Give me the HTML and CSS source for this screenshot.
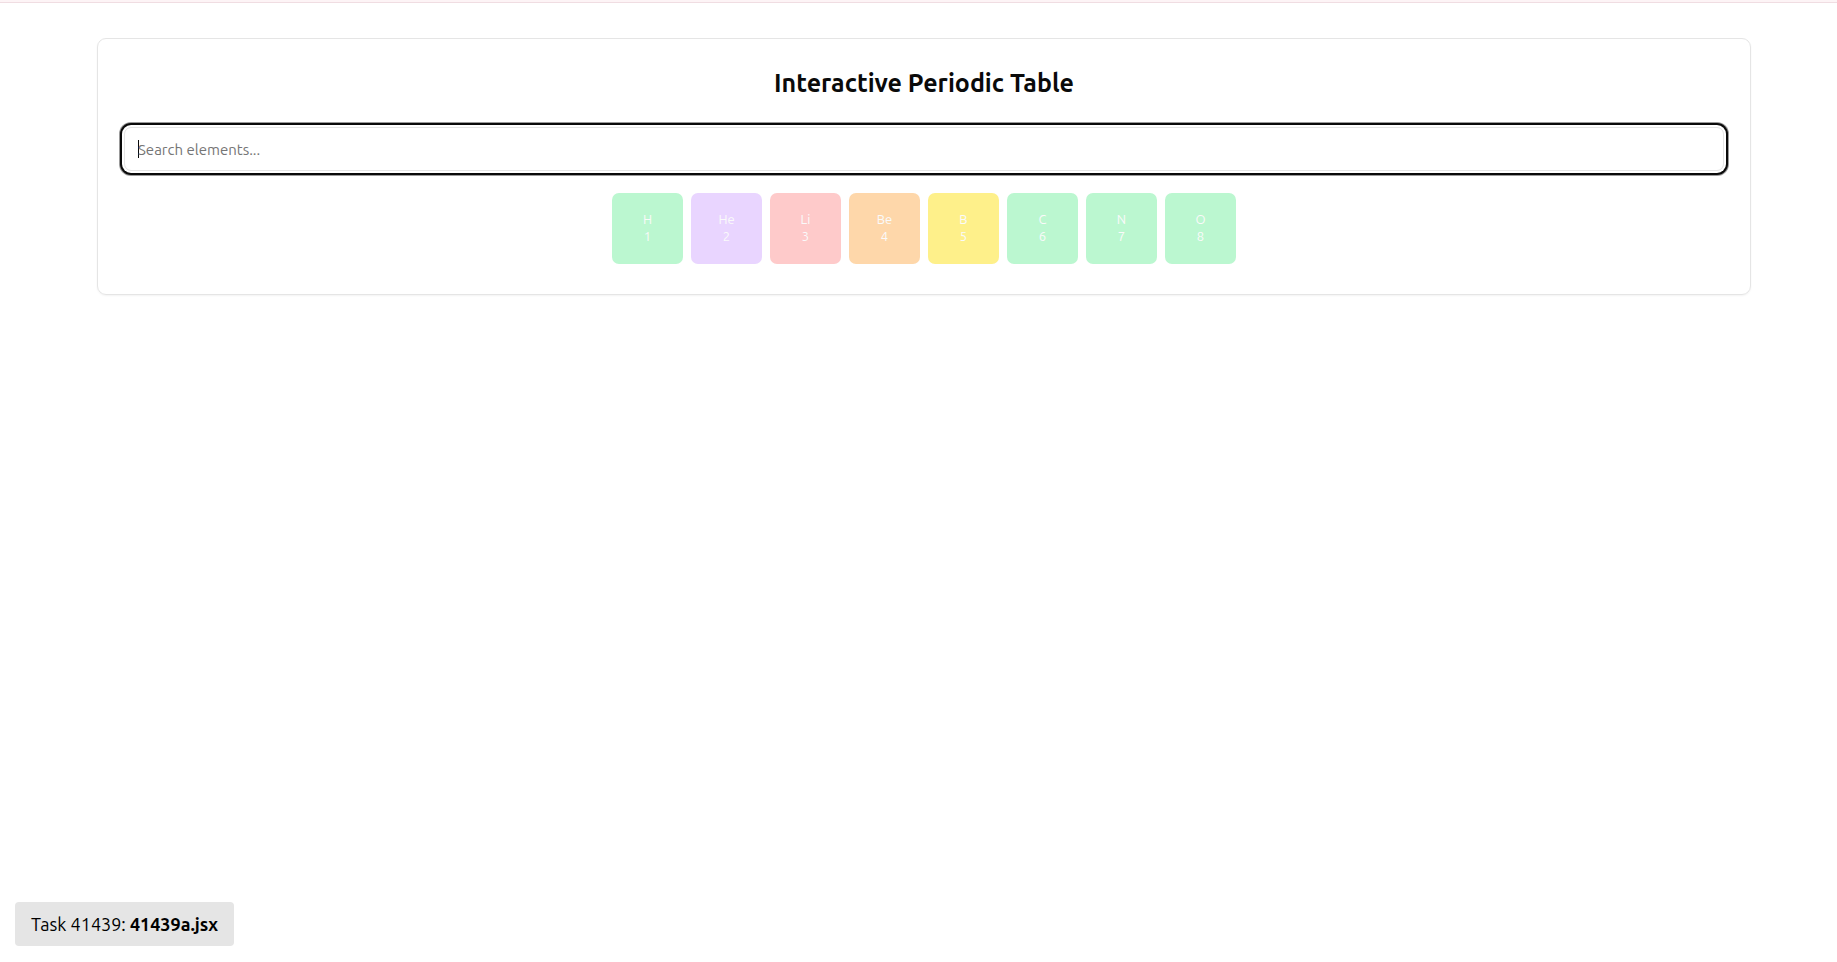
FILE: index.html
```html
<!DOCTYPE html>
<html lang="en">
<head>
<meta charset="utf-8">
<title>Interactive Periodic Table</title>
<link rel="stylesheet" href="styles.css">
</head>
<body>
<div class="top-strip"></div>
<main class="page">
  <section class="card">
    <h1 class="title">Interactive Periodic Table</h1>
    <input class="search" type="text" placeholder="Search elements..." aria-label="Search elements" autofocus>
    <div class="elements">
      <button class="element nonmetal" type="button"><span>H</span><span>1</span></button>
      <button class="element noble" type="button"><span>He</span><span>2</span></button>
      <button class="element alkali" type="button"><span>Li</span><span>3</span></button>
      <button class="element alkaline" type="button"><span>Be</span><span>4</span></button>
      <button class="element metalloid" type="button"><span>B</span><span>5</span></button>
      <button class="element nonmetal" type="button"><span>C</span><span>6</span></button>
      <button class="element nonmetal" type="button"><span>N</span><span>7</span></button>
      <button class="element nonmetal" type="button"><span>O</span><span>8</span></button>
    </div>
  </section>
</main>
<div class="task-badge">Task 41439: <strong>41439a.jsx</strong></div>
</body>
</html>
```
FILE: styles.css
```css
*, *::before, *::after { box-sizing: border-box; }

body {
  margin: 0;
  background: #fff;
  color: #0a0a0a;
  font-family: Ubuntu, "Noto Sans", "Open Sans", sans-serif;
}

.top-strip {
  height: 3px;
  background: #fdf4f6;
  border-bottom: 1px solid #f0dde2;
}

.page { padding: 35px 86px 35px 97px; }

.card {
  display: flex;
  flex-direction: column;
  padding: 26px 26px 30px;
  border: 1px solid #e5e5e5;
  border-radius: 9px;
  box-shadow: 0 1px 2px rgba(0, 0, 0, 0.05);
}

.title {
  margin: 0 0 26px;
  font-size: 25px;
  font-weight: 600;
  line-height: 36px;
  text-align: center;
}

.search {
  width: 100%;
  height: 44px;
  margin-bottom: 22px;
  padding: 0 13px;
  border: 1px solid #e5e5e5;
  border-radius: 7px;
  outline: none;
  background: #fff;
  color: #0a0a0a;
  font-family: inherit;
  font-size: 15px;
}

.search::placeholder { color: #757575; opacity: 1; }

.search:focus {
  box-shadow: 0 0 0 2px #fff, 0 0 0 4px #0a0a0a, 0 0 0 5px #999;
}

/* Steady caret while the field is empty */
.search:focus:placeholder-shown {
  caret-color: transparent;
  background: linear-gradient(#0a0a0a, #0a0a0a) 13px center / 1px 18px no-repeat #fff;
}

.elements {
  display: flex;
  flex-wrap: wrap;
  justify-content: center;
  gap: 8px;
}

.element {
  display: flex;
  flex-direction: column;
  align-items: center;
  justify-content: center;
  width: 71px;
  height: 71px;
  padding: 0 0 2px;
  border: 0;
  border-radius: 7px;
  color: #fafafa;
  font-family: inherit;
  font-size: 13px;
  line-height: 17px;
}

.nonmetal { background: #bbf7d0; }
.noble { background: #e9d5ff; }
.alkali { background: #fecaca; }
.alkaline { background: #fed7aa; }
.metalloid { background: #fef08a; }

.task-badge {
  position: fixed;
  bottom: 16px;
  left: 15px;
  padding: 9px 16px;
  border-radius: 4px;
  background: #e5e5e5;
  color: #000;
  font-size: 18px;
  line-height: 26px;
}
```
